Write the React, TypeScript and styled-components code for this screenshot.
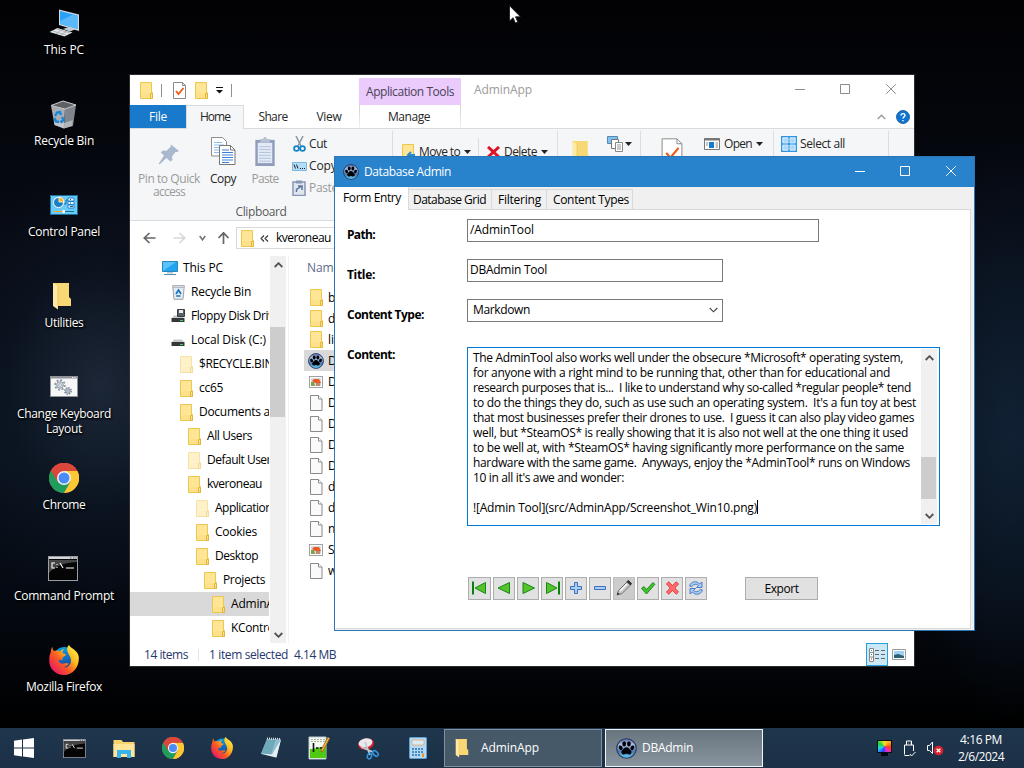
import React, { useLayoutEffect, useRef, useState } from 'react';
import styled, { createGlobalStyle, css } from 'styled-components';

const Global = createGlobalStyle`
  * { box-sizing: border-box; }
  html, body, #root { margin: 0; width: 1024px; height: 768px; overflow: hidden; background: #000; }
  body { font: 12px/16px "Open Sans", "Noto Sans", sans-serif; color: #000; }
  svg { display: block; flex: none; }
`;

/* ---------- text ---------- */

const Run = styled.span<{ $color?: string; $bold?: boolean }>`
  display: inline-block;
  white-space: pre;
  color: ${p => p.$color || 'inherit'};
  font-weight: ${p => (p.$bold ? 700 : 400)};
`;

type TextProps = { children: string; w?: number; color?: string; bold?: boolean };

/* Tracks a run of text so that it fills the given width. */
function Text({ children, w, color, bold }: TextProps) {
  const ref = useRef<HTMLSpanElement>(null);
  const [spacing, setSpacing] = useState(0);
  useLayoutEffect(() => {
    if (!w || !ref.current) return;
    ref.current.style.letterSpacing = '0px';
    const natural = ref.current.getBoundingClientRect().width;
    const next = (w - natural) / children.length;
    ref.current.style.letterSpacing = `${next}px`;
    setSpacing(next);
  }, [w, children]);
  return (
    <Run ref={ref} $color={color} $bold={bold} style={{ letterSpacing: `${spacing}px` }}>
      {children}
    </Run>
  );
}

/* ---------- icons ---------- */

const Folder = ({ faded }: { faded?: boolean }) => (
  <svg width="14" height="17" viewBox="0 0 14 17" opacity={faded ? 0.5 : 1}>
    <path d="M.5.5h11v10h1v6H.5z" fill="#ffe08a" stroke="#edc64c" />
    <path d="M1 1h10v10H1z" fill="#ffe596" />
    <path d="M10.5 16.500v-5h2v5z" fill="#ffe08a" stroke="#e3b63a" />
  </svg>
);

const BigFolder = ({ w = 20, h = 28 }: { w?: number; h?: number }) => (
  <svg width={w} height={h} viewBox="0 0 20 28">
    <path d="M1 1h16v14l2 2v7H6z" fill="#f8d775" />
    <path d="M1 1l5 3.500v23L1 24z" fill="#ffe9a6" />
    <path d="M6 4.500v19.500" stroke="#eec65a" />
  </svg>
);

const Page = () => (
  <svg width="13" height="16" viewBox="0 0 13 16">
    <path d="M.5.5h8l3.500 3.500v11.500H.5z" fill="#fafafa" stroke="#8a8a8a" />
    <path d="M8.500.5v3.500H12" fill="#fff" stroke="#8a8a8a" />
  </svg>
);

const Thumb = () => (
  <svg width="14" height="12" viewBox="0 0 14 12">
    <rect x=".5" y=".5" width="13" height="11" fill="#fff" stroke="#a0a0a0" />
    <rect x="2" y="2" width="10" height="8" fill="#d3dbe0" />
    <path d="M3 5l2-2h5l2 4H6z" fill="#ea5a22" />
    <path d="M2 6h3l1 4H2z" fill="#7fa04b" />
    <path d="M7 7h4v3H7z" fill="#b98b6d" />
  </svg>
);

const Paw = ({ size = 16 }: { size?: number }) => (
  <svg width={size} height={size} viewBox="0 0 20 20">
    <defs>
      <linearGradient id="pawGlow" x1="0" y1="0" x2="0" y2="1">
        <stop offset="0" stopColor="#5d6fb0" />
        <stop offset=".3" stopColor="#a9bddf" />
        <stop offset=".65" stopColor="#4a78b4" />
        <stop offset="1" stopColor="#62d2f7" />
      </linearGradient>
    </defs>
    <circle cx="10" cy="10" r="9.300" fill="url(#pawGlow)" stroke="#26365c" strokeWidth="1.100" />
    <ellipse cx="7.800" cy="5.500" rx="1.800" ry="2.500" />
    <ellipse cx="12.300" cy="5.500" rx="1.800" ry="2.500" />
    <ellipse cx="4.500" cy="9.300" rx="1.700" ry="2.300" transform="rotate(-25 4.500 9.300)" />
    <ellipse cx="15.600" cy="9.300" rx="1.700" ry="2.300" transform="rotate(25 15.600 9.300)" />
    <path d="M10 8.800c2 0 2.400 1.600 3.700 2.600 1.800 1.400 1.200 4.300-1 4.300-1.200 0-1.700-.6-2.700-.6s-1.500.6-2.700.6c-2.200 0-2.800-2.900-1-4.300C7.600 10.400 8 8.800 10 8.800z" />
  </svg>
);

const Chrome = ({ size }: { size: number }) => (
  <svg width={size} height={size} viewBox="0 0 30 30">
    <circle cx="15" cy="15" r="15" fill="#d9483b" />
    <path d="M2 7.500A15 15 0 0 0 15 30l6.500-11.500h-13z" fill="#1f9d5c" />
    <path d="M15 30A15 15 0 0 0 28.500 8H15l6.500 10.500z" fill="#fcc934" />
    <path d="M2 7.500L8.700 19 15 8h13.500A15 15 0 0 0 2 7.500z" fill="#d9483b" />
    <circle cx="15" cy="15" r="7" fill="#f4f4f4" />
    <circle cx="15" cy="15" r="5.500" fill="#4b8bf5" />
  </svg>
);

const Firefox = ({ size }: { size: number }) => (
  <svg width={size} height={size} viewBox="0 0 30 30">
    <defs>
      <linearGradient id="foxFire" x1=".9" y1=".05" x2=".1" y2=".8">
        <stop offset="0" stopColor="#fff04a" />
        <stop offset=".35" stopColor="#ffb81f" />
        <stop offset=".65" stopColor="#fb5a22" />
        <stop offset="1" stopColor="#ea1f62" />
      </linearGradient>
      <linearGradient id="foxGlobe" x1=".3" y1="0" x2=".5" y2="1">
        <stop offset="0" stopColor="#05a4ea" />
        <stop offset="1" stopColor="#1c3f9b" />
      </linearGradient>
    </defs>
    <circle cx="15.500" cy="13" r="11" fill="url(#foxGlobe)" />
    <path d="M3.500 2c0 2 .5 3 1.500 4 2-1 4.500-.5 6 .5C12 5 14 4 15.500 4 14 5 13.500 6.500 13.500 8c1 1 2.500.8 3.500 1.500-.5 1.500-3 2-3.500 3.500 0 1 .3 1.500 0 2-2-.8-4 0-4 1 1 2 3 3 5.500 2.500 2-.5 3-1 4.500 0 .5 1-3 3.500-6 3.500 5 1.500 8.500-2 8.500-6.500 0-4-3-6.500-3.700-9.500C17.800 3.500 18.500 1 20 0c1 3 9 5 9.800 12C30.500 22 24 30 15 30S-.5 23 .3 14C.5 9 2 7.500 2 6c0-2 .5-3 1.500-4z" fill="url(#foxFire)" />
  </svg>
);

const Terminal = ({ w, h }: { w: number; h: number }) => (
  <svg width={w} height={h} viewBox="0 0 30 25">
    <rect x=".5" y=".5" width="29" height="24" fill="#050505" stroke="#9b9da3" />
    <path d="M1 4h28v2C14 7 6 11 1 17z" fill="#454545" />
    <path d="M1 1h28v2H1z" fill="#d3d6db" />
    <path d="M22 2h1.500M25 2h1.500M27.500 2h1" stroke="#555" />
    <path d="M7 7H4v5h3M9 8v1M9 11v1M12 7l3 5M18 12h8" stroke="#fff" fill="none" strokeWidth="1.100" />
  </svg>
);

const Computer = () => (
  <svg width="31" height="28" viewBox="0 0 31 28">
    <path d="M10 .5l20 5V22L10 16z" fill="#d5dbe0" />
    <path d="M11 2l17.500 4.500V20L11 15z" fill="#2aa1f7" />
    <path d="M11 12L24 5.500l4.500 1V20L11 15z" fill="#5bb9fa" />
    <path d="M14 20l6-2 7 2-6 2.500z" fill="#c5ccd1" />
    <path d="M.5 23l8-4 15 4.500-8 4z" fill="#dfe3e6" />
    <path d="M4 22l13 4M8 20l13 4M7 25l6-5M12 26l6-4" stroke="#98a2ab" strokeWidth=".7" />
  </svg>
);

const RecycleBin = () => (
  <svg width="27" height="29" viewBox="0 0 27 29">
    <path d="M1 5.500L15 9l-1 19.500L4.500 25z" fill="#a9adb2" />
    <path d="M15 9l11-4-3 21-9 2.500z" fill="#7f858b" />
    <path d="M1 5.500L13 1l13 4-11 4z" fill="#5e6064" stroke="#c9cccf" />
    <path d="M4 22l10 1 9-3-1 6-8 2.500L4.500 25z" fill="#d3d6d8" opacity=".6" />
    <path d="M5 16l2-3.500 3-.5 1 3M12 17l1.500 3-3 2.500M4.500 18l1.500 3.500 3 .5" stroke="#1386dd" strokeWidth="2.300" fill="none" />
  </svg>
);

const ControlPanel = () => (
  <svg width="28" height="20" viewBox="0 0 28 20">
    <rect x=".5" y=".5" width="27" height="19" fill="#6bcbf7" stroke="#1c6e9d" />
    <circle cx="8.500" cy="7.500" r="5" fill="#1c7cc6" stroke="#fff" />
    <path d="M9 7V2a5 5 0 0 1 5 5z" fill="#ffb319" stroke="#fff" strokeWidth=".8" />
    <path d="M14 9h2V5h2" stroke="#1c6e9d" fill="none" />
    <path d="M18 3h6v3h-6zM18 6.500h6v3h-6zM18 10h6v3h-6z" fill="#eef9ff" stroke="#1c7cc6" strokeWidth=".9" />
    <path d="M20 4.500h1M20 8h1M20 11.500h3" stroke="#14629a" />
    <path d="M4 16.500h9" stroke="#f2a52b" /><path d="M14 16.500h10" stroke="#1c6e9d" />
    <rect x="12.500" y="15" width="2.500" height="3" fill="#fff" />
  </svg>
);

const Gears = () => (
  <svg width="28" height="21" viewBox="0 0 28 21">
    <rect x=".5" y=".5" width="27" height="20" fill="#f7f7f7" stroke="#8e9196" />
    <path d="M0 1.500h28" stroke="#8e9196" strokeWidth="2" /><path d="M22 1.500h1M24.500 1.500h1" stroke="#fff" />
    <circle cx="10" cy="9" r="4.800" fill="none" stroke="#8b98a3" strokeWidth="1.800" strokeDasharray="2 1.700" />
    <circle cx="10" cy="9" r="3.300" fill="#d5dce1" stroke="#8b98a3" /><circle cx="10" cy="9" r="1.300" fill="#fff" stroke="#8b98a3" strokeWidth=".7" />
    <circle cx="18" cy="15" r="3.200" fill="none" stroke="#7f8c97" strokeWidth="1.500" strokeDasharray="1.500 1" />
    <circle cx="18" cy="15" r="2.200" fill="#d5dce1" stroke="#7f8c97" /><circle cx="18" cy="15" r=".8" fill="#7f8c97" />
  </svg>
);

const CheckDoc = ({ w = 13, h = 17 }: { w?: number; h?: number }) => (
  <svg width={w} height={h} viewBox="0 0 13 17">
    <path d="M.5.5h9l3 3v13H.5z" fill="#fff" stroke="#8a8a8a" strokeWidth={13 / w} />
    <path d="M9.500.5v3h3" fill="none" stroke="#8a8a8a" strokeWidth={13 / w} />
    <path d="M3 9l2.500 3 5-6" fill="none" stroke="#f25a16" strokeWidth={w > 13 ? 1.3 : 1.8} />
  </svg>
);

const Caret = () => <svg width="7" height="4" viewBox="0 0 7 4"><path d="M0 0h7L3.500 4z" fill="#222" /></svg>;

type CaptionKind = 'min' | 'max' | 'close';
const captionKinds: CaptionKind[] = ['min', 'max', 'close'];
const captionPaths: Record<CaptionKind, string> = {
  min: 'M0 5.500h10',
  max: 'M.5.5h9v9h-9z',
  close: 'M.2.2l9.600 9.600M9.800.2L.2 9.800',
};
const CaptionIcon = ({ kind, color }: { kind: CaptionKind; color: string }) => (
  <svg width="10" height="10" viewBox="0 0 10 10"><path d={captionPaths[kind]} fill="none" stroke={color} /></svg>
);

const Chevron = ({ up, color = '#505050', size = 9, weight = 1.8 }: { up?: boolean; color?: string; size?: number; weight?: number }) => (
  <svg width={size} height="6" viewBox={`0 0 ${size} 6`}>
    <path d={up ? `M.7 5L${size / 2} 1.200 ${size - 0.7} 5` : `M.7 1L${size / 2} 4.800 ${size - 0.7} 1`} fill="none" stroke={color} strokeWidth={weight} />
  </svg>
);

/* ---------- desktop ---------- */

const Desktop = styled.div`
  position: relative;
  width: 1024px;
  height: 768px;
  display: flex;
  flex-direction: column;
  overflow: hidden;
  background:
    radial-gradient(ellipse 170px 220px at 100px 385px, rgba(42, 54, 74, 0.6), rgba(20, 32, 50, 0.3) 55%, transparent),
    radial-gradient(ellipse 110px 290px at 1010px 430px, rgba(22, 44, 68, 0.6), transparent),
    linear-gradient(#020204 0, #04060c 120px, #070b14 260px, #08111c 450px, #050a12 590px, #010204 700px, #000 728px);
`;

const IconColumn = styled.div`
  flex: 1;
  width: 128px;
  display: grid;
  grid-template-rows: repeat(8, 91px);
`;

const Shortcut = styled.div`
  display: flex;
  flex-direction: column;
  align-items: center;
  padding-top: 6px;
  color: #fff;
  line-height: 15px;
  text-shadow: 1px 1px 2px #000, 0 1px 2px #000;
`;

const ShortcutIcon = styled.div<{ $lift?: number; $shift?: number }>`
  height: 36px;
  display: flex;
  align-items: center;
  padding-bottom: ${p => 2 + (p.$lift || 0) * 2}px;
  padding-right: ${p => p.$shift || 0}px;
`;

const Windowed = styled.section<{ $x: number; $y: number; $w: number; $h: number }>`
  position: absolute;
  left: ${p => p.$x}px;
  top: ${p => p.$y}px;
  width: ${p => p.$w}px;
  height: ${p => p.$h}px;
  display: flex;
  flex-direction: column;
  background: #fff;
`;

const shortcuts: { icon: React.ReactNode; lift?: number; shift?: number; lines: [string, number][] }[] = [
  { icon: <Computer />, lines: [['This PC', 40]] },
  { icon: <RecycleBin />, shift: 1, lines: [['Recycle Bin', 60]] },
  { icon: <ControlPanel />, lines: [['Control Panel', 72]] },
  { icon: <BigFolder />, shift: 4, lines: [['Utilities', 39]] },
  { icon: <Gears />, lift: 1, lines: [['Change Keyboard', 94], ['Layout', 36]] },
  { icon: <Chrome size={30} />, lines: [['Chrome', 43]] },
  { icon: <Terminal w={30} h={25} />, lift: 1, shift: 2, lines: [['Command Prompt', 100]] },
  { icon: <Firefox size={30} />, lines: [['Mozilla Firefox', 76]] },
];

/* ---------- explorer ---------- */

const ExplorerFrame = styled(Windowed)`
  outline: 1px solid #2b2c2f;
  color: #262626;
`;

const QuickBar = styled.div`
  height: 30px;
  flex: none;
  display: flex;
  align-items: center;
`;

const Slot = styled.div<{ $w: number; $pad?: number }>`
  width: ${p => p.$w}px;
  height: 100%;
  padding-left: ${p => p.$pad || 0}px;
  flex: none;
  display: flex;
  align-items: center;
`;

const Tick = styled.i`
  width: 1px;
  height: 13px;
  background: #8f8f8f;
`;

const ContextTab = styled.div`
  width: 102px;
  height: 27px;
  align-self: flex-end;
  display: flex;
  align-items: center;
  justify-content: center;
  padding-top: 1px;
  background: #eacbfb;
  color: #494158;
`;

const Captions = styled.div<{ $right: number; $top: number }>`
  margin-left: auto;
  display: flex;
  gap: 35px;
  padding: ${p => p.$top}px ${p => p.$right}px 0 0;
  align-self: flex-start;
  > :last-child { margin-left: 1px; }
`;

const RibbonTabs = styled.div`
  height: 24px;
  flex: none;
  display: flex;
  border-bottom: 1px solid #dadbdc;
`;

const RibbonTab = styled.div<{ $w: number; $kind?: 'file' | 'active' | 'context' }>`
  width: ${p => p.$w}px;
  height: 23px;
  display: flex;
  align-items: center;
  justify-content: center;
  ${p => p.$kind === 'file' && css`background: #1979ca; color: #fff;`}
  ${p => p.$kind === 'active' && css`background: #f5f6f7; border: 1px solid #dadbdc; border-bottom: 0; height: 24px; padding-bottom: 1px;`}
  ${p => p.$kind === 'context' && css`
    margin-left: 3px;
    padding-right: 2px;
    border: solid transparent;
    border-width: 0 1px;
    border-image: linear-gradient(#cfcfcf, #f4f4f4) 1;
  `}
`;

const RibbonHelp = styled.div`
  margin-left: auto;
  display: flex;
  align-items: center;
  gap: 10px;
  padding-right: 4px;
`;

const Ribbon = styled.div`
  height: 92px;
  flex: none;
  display: flex;
  background: #f5f6f7;
  border-bottom: 1px solid #dadbdc;
`;

const Group = styled.div<{ $w: number }>`
  width: ${p => p.$w}px;
  height: 86px;
  margin-top: 2px;
  flex: none;
  display: flex;
  flex-direction: column;
  border-right: 1px solid #dcdddf;
`;

const GroupRow = styled.div`
  display: flex;
  height: 73px;
  flex: none;
`;

const BigButton = styled.div<{ $w: number; $dim?: boolean }>`
  width: ${p => p.$w}px;
  padding-top: 4px;
  display: flex;
  flex-direction: column;
  align-items: center;
  line-height: 13px;
  color: ${p => (p.$dim ? '#9a9a9a' : '#262626')};
`;

const BigIcon = styled.div`
  height: 37px;
  display: flex;
  justify-content: center;
  align-items: flex-start;
  padding-top: 2px;
`;

const SmallStack = styled.div`
  display: flex;
  flex-direction: column;
  padding-top: 2px;
`;

const SmallButton = styled.div<{ $dim?: boolean }>`
  height: 22px;
  display: flex;
  align-items: center;
  color: ${p => (p.$dim ? '#9a9a9a' : '#262626')};
`;

const GroupName = styled.div`
  align-self: center;
  color: #5a5a5a;
`;

const Inline = styled.div<{ $top: number; $left: number; $gap?: number }>`
  display: flex;
  align-items: center;
  gap: ${p => p.$gap ?? 4}px;
  height: 16px;
  margin: ${p => p.$top}px 0 0 ${p => p.$left}px;
`;

const InlineCell = styled.div<{ $w: number; $line?: boolean }>`
  width: ${p => p.$w}px;
  flex: none;
  ${p => p.$line && css`border-right: 1px solid #dcdddf; margin-top: 7px; > div { margin-top: 6px; }`}
`;

const NavBar = styled.div`
  height: 35px;
  flex: none;
  display: flex;
  align-items: flex-start;
  padding: 6px 0 0 13px;
`;

const NavSlot = styled.div<{ $w: number }>`
  width: ${p => p.$w}px;
  height: 22px;
  display: flex;
  align-items: center;
`;

const AddressBox = styled.div`
  flex: 1;
  height: 22px;
  border: 1px solid #d9d9d9;
  display: flex;
  align-items: center;
  padding-left: 4px;
  color: #000;
`;

const Browser = styled.div`
  height: 387px;
  flex: none;
  display: flex;
  color: #000;
`;

const Tree = styled.div`
  width: 139px;
  margin-right: 1px;
  overflow: hidden;
`;

const TreeRow = styled.div<{ $indent: number; $on?: boolean }>`
  height: 24px;
  padding-left: ${p => p.$indent}px;
  display: flex;
  align-items: center;
  background: ${p => (p.$on ? '#d9d9d9' : 'transparent')};
`;

const TreeGlyph = styled.div<{ $w: number }>`
  width: ${p => p.$w}px;
  flex: none;
`;

const Scrollbar = styled.div<{ $w: number }>`
  width: ${p => p.$w}px;
  flex: none;
  display: flex;
  flex-direction: column;
  align-items: center;
  background: #f0f0f0;
`;

const ScrollArrow = styled.div`
  height: 17px;
  display: flex;
  align-items: center;
`;

const ScrollGap = styled.div<{ $h: number }>`
  height: ${p => p.$h}px;
`;

const ScrollThumb = styled.div<{ $h: number }>`
  width: 15px;
  height: ${p => p.$h}px;
  margin: 0 1px auto 0;
  background: #cdcdcd;
`;

const FileList = styled.div`
  flex: 1;
  margin-left: 2px;
  border-left: 1px solid #f0f0f0;
  padding-left: 15px;
`;

const ListHeader = styled.div`
  height: 31px;
  padding: 4px 0 0 3px;
  color: #5c6b8c;
`;

const FileRow = styled.div<{ $on?: boolean }>`
  height: 21px;
  padding-left: 4px;
  display: flex;
  align-items: center;
  background: ${p => (p.$on ? '#d9d9d9' : 'transparent')};
`;

const FileGlyph = styled.div<{ $pad: number }>`
  width: 20px;
  padding-left: ${p => p.$pad}px;
  flex: none;
  display: flex;
  align-items: center;
`;

const StatusBar = styled.div`
  height: 23px;
  flex: none;
  display: flex;
  align-items: center;
  padding-left: 14px;
  color: #26376d;
`;

const Divider = styled.i`
  width: 1px;
  height: 12px;
  margin: 0 10px;
  background: #e6e6e6;
`;

const ViewButtons = styled.div`
  margin-left: auto;
  display: flex;
  align-items: center;
  gap: 4px;
  padding-right: 8px;
`;

const DetailsView = styled.div`
  width: 22px;
  height: 23px;
  display: flex;
  align-items: center;
  justify-content: center;
  background: #cce8f6;
  border: 1px solid #26a0da;
`;

const MiniComputer = () => (
  <svg width="16" height="16" viewBox="0 0 16 16"><path d="M.5 1.500h15v10H.5z" fill="#22a5f0" stroke="#2b85bd" /><path d="M1 11L14 2H1z" fill="#58c4fb" /><path d="M5 12h6v1.500H5z" fill="#bcc6cc" /><path d="M2 14.500h12" stroke="#4f8eb5" /></svg>
);
const MiniBin = () => (
  <svg width="13" height="15" viewBox="0 0 13 15"><path d="M.7.7h11.600L11 14.300H2z" fill="#e8ebee" stroke="#9aa2a9" /><path d="M1 2.500h11" stroke="#b6bcc2" /><path d="M4 9l2.500-4L9 9M8.500 11H4.200" stroke="#1275c4" strokeWidth="1.700" fill="none" /></svg>
);
const MiniDrive = ({ floppy }: { floppy?: boolean }) => (
  <svg width="14" height="14" viewBox="0 0 14 14">
    <path d="M1 9l2-2.500h8L13 9z" fill="#c4c7ca" /><path d="M.5 9h13v4H.5z" fill="#35383b" /><path d="M9 11.500h3" stroke="#4bd45b" />
    {floppy && <><path d="M6.500.5h7v7h-7z" fill="#596067" stroke="#383d42" /><path d="M8 1h4v3H8z" fill="#e9ecee" /></>}
  </svg>
);

type TreeItem = { name: string; indent: number; w?: number; icon?: React.ReactNode; glyph?: number; on?: boolean; faded?: boolean };
const tree: TreeItem[] = [
  { name: 'This PC', indent: 32, w: 40, icon: <MiniComputer />, glyph: 21 },
  { name: 'Recycle Bin', indent: 42, w: 60, icon: <MiniBin />, glyph: 19 },
  { name: 'Floppy Disk Drive', indent: 41, w: 89, icon: <MiniDrive floppy />, glyph: 20 },
  { name: 'Local Disk (C:)', indent: 41, w: 75, icon: <MiniDrive />, glyph: 20 },
  { name: '$RECYCLE.BIN', indent: 50, w: 74, faded: true },
  { name: 'cc65', indent: 50, w: 24 },
  { name: 'Documents and Settings', indent: 50, w: 130 },
  { name: 'All Users', indent: 58, w: 45 },
  { name: 'Default User', indent: 58, w: 64, faded: true },
  { name: 'kveroneau', indent: 58, w: 55 },
  { name: 'Application Data', indent: 66, w: 84, faded: true },
  { name: 'Cookies', indent: 66, w: 42 },
  { name: 'Desktop', indent: 66, w: 43 },
  { name: 'Projects', indent: 74, w: 42 },
  { name: 'AdminApp', indent: 82, w: 57, on: true },
  { name: 'KControl', indent: 82, w: 46 },
];

const files: { name: string; kind: 'folder' | 'paw' | 'thumb' | 'page'; on?: boolean }[] = [
  { name: 'b', kind: 'folder' },
  { name: 'd', kind: 'folder' },
  { name: 'li', kind: 'folder' },
  { name: 'D', kind: 'paw', on: true },
  { name: 'D', kind: 'thumb' },
  { name: 'D', kind: 'page' },
  { name: 'D', kind: 'page' },
  { name: 'D', kind: 'page' },
  { name: 'D', kind: 'page' },
  { name: 'd', kind: 'page' },
  { name: 'd', kind: 'page' },
  { name: 'n', kind: 'page' },
  { name: 'S', kind: 'thumb' },
  { name: 'w', kind: 'page' },
];
const fileGlyphs = {
  folder: { pad: 2, icon: <Folder /> },
  paw: { pad: 0, icon: <Paw /> },
  thumb: { pad: 1, icon: <Thumb /> },
  page: { pad: 2, icon: <Page /> },
};

const Arrow = ({ turn = 0, color = '#666' }: { turn?: number; color?: string }) => (
  <svg width="13" height="12" viewBox="0 0 13 12"><path d="M12.500 6H1.500M6.500 1L1.300 6l5.200 5" fill="none" stroke={color} strokeWidth="1.700" transform={`rotate(${turn} 6.500 6)`} /></svg>
);

function RibbonArea() {
  return (
    <Ribbon>
      <Group $w={263}>
        <GroupRow>
          <BigButton $w={78} $dim>
            <BigIcon>
              <svg width="22" height="28" viewBox="0 0 22 28"><path d="M13 7.500l8 6.500-2 1h-1.500L14 19.500l.5 3.500-2 1.500-4-3.500-7 6.500-.7-1L6 18.500 2.800 15.500l2-2 3.700.3 4-3.800z" fill="#a9b8cd" /></svg>
            </BigIcon>
            <Text w={62}>Pin to Quick</Text>
            <Text w={32}>access</Text>
          </BigButton>
          <BigButton $w={30}>
            <BigIcon>
              <svg width="25" height="28" viewBox="0 0 25 28">
                <path d="M.5.500h11l4 4V19H.5z" fill="#fff" stroke="#8d8d8d" /><path d="M3 5.500h8M3 8h10M3 10.500h10M3 13h10M3 15.500h6" stroke="#8dbcf0" />
                <path d="M8.500 8.500h11l4.500 4.500v14.500H8.500z" fill="#fff" stroke="#777" /><path d="M19.500 8.500v4.500H24" fill="none" stroke="#777" />
                <path d="M11 13h7M11 15.500h11M11 18h11M11 20.500h11M11 23h11M11 25.500h7" stroke="#3a80d8" />
              </svg>
            </BigIcon>
            <Text w={26}>Copy</Text>
          </BigButton>
          <BigButton $w={54} $dim>
            <BigIcon>
              <svg width="20" height="29" viewBox="0 0 20 30"><path d="M0 3h20v27H0z" fill="#8f9dbb" /><path d="M2.500 6h15v21h-15z" fill="#e3eaf5" /><path d="M5 2h3l1-2h2l1 2h3v4H5z" fill="#b6c0d4" /><path d="M4 10h12M4 13h12M4 16h12M4 19h12M4 22h12M4 25h12" stroke="#b1c2de" /></svg>
            </BigIcon>
            <Text w={27}>Paste</Text>
          </BigButton>
          <SmallStack>
            <SmallButton>
              <Slot $w={17} $pad={1}>
                <svg width="13" height="16" viewBox="0 0 13 16"><path d="M3 0l5 10M10 0L5 10" stroke="#8b98a3" strokeWidth="1.500" /><circle cx="3.500" cy="12.500" r="2.400" fill="none" stroke="#1585c7" strokeWidth="1.800" /><circle cx="9.500" cy="12.500" r="2.400" fill="none" stroke="#1585c7" strokeWidth="1.800" /></svg>
              </Slot>
              <Text w={18}>Cut</Text>
            </SmallButton>
            <SmallButton>
              <Slot $w={17}>
                <svg width="15" height="9" viewBox="0 0 15 9"><path d="M.5.500h14v8H.5z" fill="#b5dcf7" stroke="#77b9e4" /><path d="M2 2.500l1.500 4M4.500 2.500l1.500 4M8 6.500h1M10 6.500h1M12 6.500h1" stroke="#222" /></svg>
              </Slot>
              <Text w={56}>Copy path</Text>
            </SmallButton>
            <SmallButton $dim>
              <Slot $w={17}>
                <svg width="14" height="16" viewBox="0 0 14 16"><path d="M1 2h12v13.500H1z" fill="#dfe6f0" stroke="#8797b4" strokeWidth="1.500" /><path d="M4 .5h6v3H4z" fill="#8797b4" /><path d="M4.500 12V9.500L9 6.500M6 6h4v4" fill="none" stroke="#5f7499" strokeWidth="1.500" /></svg>
              </Slot>
              <Text w={76}>Paste shortcut</Text>
            </SmallButton>
          </SmallStack>
        </GroupRow>
        <GroupName><Text w={51}>Clipboard</Text></GroupName>
      </Group>
      <Group $w={165}>
        <GroupRow>
          <InlineCell $w={86} $line>
            <Inline $top={6} $left={9} $gap={4}>
              <svg width="13" height="17" viewBox="0 0 13 17"><path d="M.5.500h11v16H.5z" fill="#ffe596" stroke="#edc64c" /><path d="M13 11H6M9 8l-3 3 3 3" stroke="#2b8ad4" strokeWidth="2" fill="none" /></svg>
              <Text w={41}>Move to</Text>
              <Caret />
            </Inline>
          </InlineCell>
          <Inline $top={13} $left={8} $gap={4}>
            <svg width="13" height="12" viewBox="0 0 13 12"><path d="M1 1l11 10M12 1L1 11" stroke="#e01322" strokeWidth="3" /></svg>
            <Text w={33}>Delete</Text>
            <Caret />
          </Inline>
        </GroupRow>
      </Group>
      <Group $w={83}>
        <GroupRow>
          <Inline $top={14} $left={13}>
            <BigFolder w={20} h={27} />
          </Inline>
          <Inline $top={5} $left={16} $gap={2}>
            <svg width="16" height="16" viewBox="0 0 16 16"><path d="M.5.500h10v7H.5z" fill="#7cc1f0" stroke="#5c88a8" /><path d="M4.500 3.500h7v9h-7z" fill="#fff" stroke="#777" /><path d="M8.500 6.500h7v9h-7z" fill="#fff" stroke="#888" /><path d="M10 9h4M10 11h4M10 13h4" stroke="#999" /></svg>
            <Caret />
          </Inline>
        </GroupRow>
      </Group>
      <Group $w={133}>
        <GroupRow>
          <Inline $top={13} $left={20}><CheckDoc w={22} h={28} /></Inline>
          <Inline $top={5} $left={21} $gap={4}>
            <svg width="16" height="12" viewBox="0 0 16 12"><path d="M.5.500h15v11H.5z" fill="#fff" stroke="#777" /><path d="M0 1.500h16" stroke="#777" strokeWidth="2" /><path d="M5 4h5v6H5z" fill="#1979ca" /><path d="M11.500 5h2.500M11.500 7h2.500M11.500 9h2.500M2 5h2M2 7h2" stroke="#888" /></svg>
            <Text w={28}>Open</Text>
            <Caret />
          </Inline>
        </GroupRow>
      </Group>
      <Group $w={115}>
        <GroupRow>
          <Inline $top={5} $left={7} $gap={3}>
            <svg width="16" height="16" viewBox="0 0 16 16"><path d="M.5.500h15v15H.5zM8 0v16M0 8h16" fill="#b7dffb" stroke="#2f95e0" strokeWidth="1.500" /><path d="M2 2h5v5H2zM9 2h5v5H9zM2 9h5v5H2zM9 9h5v5H9z" fill="#a9d8fa" stroke="#e6f5ff" strokeWidth=".6" /></svg>
            <Text w={45}>Select all</Text>
          </Inline>
        </GroupRow>
      </Group>
    </Ribbon>
  );
}

function Explorer() {
  return (
    <ExplorerFrame $x={130} $y={75} $w={784} $h={591}>
      <QuickBar>
        <Slot $w={31} $pad={10}><Folder /></Slot>
        <Slot $w={12}><Tick /></Slot>
        <Slot $w={22}><CheckDoc /></Slot>
        <Slot $w={21}><Folder /></Slot>
        <Slot $w={15}><svg width="7" height="7" viewBox="0 0 7 7"><path d="M0 .5h7" stroke="#111" /><path d="M0 3h7L3.500 6.500z" fill="#111" /></svg></Slot>
        <Slot $w={128}><Tick /></Slot>
        <ContextTab><Text w={88}>Application Tools</Text></ContextTab>
        <Slot $w={80} $pad={13}><Text w={58} color="#9b9b9b">AdminApp</Text></Slot>
        <Captions $right={18} $top={9}>
          {captionKinds.map(k => <CaptionIcon key={k} kind={k} color="#8c8c8c" />)}
        </Captions>
      </QuickBar>
      <RibbonTabs>
        <RibbonTab $w={56} $kind="file"><Text w={18}>File</Text></RibbonTab>
        <RibbonTab $w={58} $kind="active"><Text w={30}>Home</Text></RibbonTab>
        <RibbonTab $w={58}><Text w={29}>Share</Text></RibbonTab>
        <RibbonTab $w={54}><Text w={25}>View</Text></RibbonTab>
        <RibbonTab $w={102} $kind="context"><Text w={42}>Manage</Text></RibbonTab>
        <RibbonHelp>
          <Chevron up color="#9b9b9b" weight={1.4} />
          <svg width="14" height="14" viewBox="0 0 14 14"><circle cx="7" cy="7" r="6.500" fill="#0f75d0" stroke="#0a4f93" strokeWidth=".8" /><path d="M5 5.500c0-2.500 4-2.500 4-.2C9 7 7 6.700 7 8.500M7 10v1.300" fill="none" stroke="#fff" strokeWidth="1.400" /></svg>
        </RibbonHelp>
      </RibbonTabs>
      <RibbonArea />
      <NavBar>
        <NavSlot $w={30}><Arrow /></NavSlot>
        <NavSlot $w={26}><Arrow turn={180} color="#d8d8d8" /></NavSlot>
        <NavSlot $w={18}><Chevron size={7} color="#777" weight={1.6} /></NavSlot>
        <NavSlot $w={19}><Arrow turn={90} /></NavSlot>
        <AddressBox>
          <Slot $w={19}><Folder /></Slot>
          <Slot $w={16}><svg width="9" height="7" viewBox="0 0 9 7"><path d="M4 .5l-3 3 3 3M8 .5l-3 3 3 3" fill="none" stroke="#333" strokeWidth="1.100" /></svg></Slot>
          <Text w={55}>kveroneau</Text>
        </AddressBox>
      </NavBar>
      <Browser>
        <Tree>
          {tree.map(t => (
            <TreeRow key={t.name} $indent={t.indent} $on={t.on}>
              <TreeGlyph $w={t.glyph || 19}>{t.icon || <Folder faded={t.faded} />}</TreeGlyph>
              <Text w={t.w}>{t.name}</Text>
            </TreeRow>
          ))}
        </Tree>
        <Scrollbar $w={16}>
          <ScrollArrow><Chevron up /></ScrollArrow>
          <ScrollGap $h={54} />
          <ScrollThumb $h={90} />
          <ScrollArrow><Chevron /></ScrollArrow>
        </Scrollbar>
        <FileList>
          <ListHeader><Text w={33}>Name</Text></ListHeader>
          {files.map((f, i) => (
            <FileRow key={i} $on={f.on}>
              <FileGlyph $pad={fileGlyphs[f.kind].pad}>{fileGlyphs[f.kind].icon}</FileGlyph>
              <Text>{f.name}</Text>
            </FileRow>
          ))}
        </FileList>
      </Browser>
      <StatusBar>
        <Text w={44}>14 items</Text>
        <Divider />
        <Text w={79}>1 item selected</Text>
        <Slot $w={57} $pad={6}><Text w={42}>4.14 MB</Text></Slot>
        <ViewButtons>
          <DetailsView>
            <svg width="17" height="14" viewBox="0 0 17 14"><path d="M.5.500h4v13h-4zM.5 4.500h4M.5 9h4" fill="#fff" stroke="#888" /><path d="M6 2.500h4M12 2.500h4M6 6.500h4M12 6.500h4M6 10.500h4M12 10.500h4" stroke="#666" /><path d="M2 2.500h1" stroke="#2a8" /><path d="M2 6.500h1" stroke="#36c" /><path d="M2 11h1" stroke="#d22" /></svg>
          </DetailsView>
          <svg width="14" height="11" viewBox="0 0 14 11"><path d="M.5.500h13v10H.5z" fill="#fff" stroke="#999" /><path d="M2 2h10v7H2z" fill="#9fd0f5" /><path d="M2 6l4-1 6 2v2H2z" fill="#2e5f74" /></svg>
        </ViewButtons>
      </StatusBar>
    </ExplorerFrame>
  );
}

/* ---------- database window ---------- */

const AdminFrame = styled(Windowed)`
  border: 1px solid #2a76b6;
  background: #f0f0f0;
`;

const TitleBar = styled.header`
  height: 30px;
  flex: none;
  display: flex;
  align-items: center;
  gap: 5px;
  padding-left: 8px;
  background: #2882cc;
  color: #fff;
`;

const TabStrip = styled.div`
  height: 22px;
  flex: none;
  display: flex;
  align-items: flex-end;
`;

const Tab = styled.div<{ $w: number; $pad: number; $on?: boolean }>`
  width: ${p => p.$w}px;
  height: ${p => (p.$on ? 23 : 20)}px;
  padding-left: ${p => p.$pad}px;
  padding-top: ${p => (p.$on ? 3 : 2)}px;
  background: ${p => (p.$on ? '#fff' : '#f0f0f0')};
  border: solid #d9d9d9;
  border-width: ${p => (p.$on ? '0 1px 0 0' : '1px 1px 0 0')};
  ${p => p.$on && css`margin-bottom: -1px; z-index: 1;`}
`;

const Sheet = styled.div`
  flex: 1;
  margin: 0 3px 1px 0;
  border: 1px solid #d9d9d9;
  border-left-color: #fff;
  background: #fff;
  padding: 9px 0 0 11px;
`;

const Field = styled.div<{ $h: number; $top?: number; $drop: number }>`
  height: ${p => p.$h}px;
  margin-top: ${p => p.$top || 0}px;
  display: grid;
  grid-template-columns: 120px 1fr;
  align-items: start;
  justify-items: start;
  > span { margin-top: ${p => p.$drop}px; }
`;

const InputBox = styled.div<{ $w: number; $pad: number }>`
  width: ${p => p.$w}px;
  height: 23px;
  border: 1px solid #7a7a7a;
  display: flex;
  justify-content: space-between;
  align-items: center;
  padding: 0 4px 1px ${p => p.$pad}px;
`;

const Editor = styled.div`
  width: 473px;
  height: 179px;
  border: 1px solid #0078d7;
  display: flex;
  justify-content: space-between;
  padding: 1px 2px 1px 5px;
  line-height: 15px;
`;

const Line = styled.div`
  height: 15px;
  display: flex;
`;

const EditorText = styled.div`
  padding-top: 1px;
`;

const TextCursor = styled.i`
  width: 1px;
  height: 14px;
  background: #000;
`;

const ActionRow = styled.div`
  display: flex;
  margin: 51px 0 0 121px;
`;

const ToolButton = styled.div<{ $on?: boolean; $wide?: boolean }>`
  width: ${p => (p.$wide ? 23 : 22)}px;
  height: 23px;
  margin-right: 2px;
  display: flex;
  align-items: center;
  justify-content: center;
  padding: 0 1px 1px 0;
  background: ${p => (p.$on ? '#cccccc' : '#e1e1e1')};
  border: 1px solid ${p => (p.$on ? '#bfbfbf' : '#adadad')};
`;

const ExportButton = styled.div`
  width: 73px;
  height: 23px;
  margin-left: 36px;
  display: flex;
  align-items: center;
  justify-content: center;
  background: #e1e1e1;
  border: 1px solid #adadad;
`;

const green = { fill: '#57c32c', stroke: '#148a14' };
const actions: React.ReactNode[] = [
  <><path d="M2 1.500v13" stroke="#0b800b" strokeWidth="2" /><path d="M14.500 2.500v11L4 8z" {...green} /></>,
  <path d="M13.500 2.500v11L2 8z" {...green} />,
  <path d="M3 2.500v11L14.500 8z" {...green} />,
  <><path d="M15 1.500v13" stroke="#0b800b" strokeWidth="2" /><path d="M2.500 2.500v11L13 8z" {...green} /></>,
  <path d="M6.500 2.500h3v4h4v3h-4v4h-3v-4h-4v-3h4z" fill="#a9cdf7" stroke="#3b70bd" />,
  <path d="M2.500 6.500h11v3h-11z" fill="#a9cdf7" stroke="#3b70bd" />,
  <><path d="M1 15l1.500-4.500L11 2l3.500 3-8.500 8.500z" fill="#c9c9c9" stroke="#6d6d6d" /><path d="M11 1.500l1.500-1 3 3-1 1.500z" fill="#333" stroke="#333" /><path d="M1 15l.8-2.500L3.500 14z" fill="#222" /><path d="M4 11l7-7" stroke="#fff" strokeWidth="1.200" /></>,
  <path d="M1.500 8.500l2.500-2 2.500 3L13 2.500l1.800 1.800L6.500 14z" fill="#3fc32f" stroke="#23851b" />,
  <path d="M2.500 4l2.200-2.200 3.800 3.800 3.800-3.800L14.500 4l-3.700 4 3.700 4-2.200 2.200-3.800-3.800-3.800 3.800L2.500 12l3.700-4z" fill="#ff6b6b" stroke="#e03e3e" />,
  <><path d="M1.500 6C3 1 9 .5 11.500 4L14 2v5.500H8.500L10.500 5.500C8.500 3.500 5 4 4 6.500z" fill="#a9cdf7" stroke="#3f74c0" strokeWidth=".9" /><path d="M14.500 10C13 15 7 15.500 4.500 12L2 14V8.500h5.500L5.500 10.500c2 2 5.500 1.500 6.500-1z" fill="#a9cdf7" stroke="#3f74c0" strokeWidth=".9" /></>,
];

const content: [string, number][] = [
  ['The AdminTool also works well under the obsecure *Microsoft* operating system,', 430],
  ['for anyone with a right mind to be running that, other than for educational and', 417],
  ['research purposes that is...  I like to understand why so-called *regular people* tend', 438],
  ["to do the things they do, such as use such an operating system.  It's a fun toy at best", 443],
  ['that most businesses prefer their drones to use.  I guess it can also play video games', 441],
  ['well, but *SteamOS* is really showing that it is also not well at the one thing it used', 435],
  ['to be well at, with *SteamOS* having significantly more performance on the same', 431],
  ['hardware with the same game.  Anyways, enjoy the *AdminTool* runs on Windows', 437],
  ["10 in all it's awe and wonder:", 151],
  ['', 0],
  ['![Admin Tool](src/AdminApp/Screenshot_Win10.png)', 284],
];

function DatabaseAdmin() {
  return (
    <AdminFrame $x={334} $y={156} $w={641} $h={475}>
      <TitleBar>
        <Paw />
        <Text w={87}>Database Admin</Text>
        <Captions $right={18} $top={9}>
          {captionKinds.map(k => <CaptionIcon key={k} kind={k} color="#fff" />)}
        </Captions>
      </TitleBar>
      <TabStrip>
        <Tab $w={74} $pad={8} $on><Text w={58}>Form Entry</Text></Tab>
        <Tab $w={83} $pad={4}><Text w={73}>Database Grid</Text></Tab>
        <Tab $w={55} $pad={6}><Text w={43}>Filtering</Text></Tab>
        <Tab $w={86} $pad={6}><Text w={76}>Content Types</Text></Tab>
      </TabStrip>
      <Sheet>
        <Field $h={40} $drop={8}><Text bold w={28}>Path:</Text><InputBox $w={352} $pad={2}><Text w={64}>/AdminTool</Text></InputBox></Field>
        <Field $h={40} $drop={8}><Text bold w={28}>Title:</Text><InputBox $w={256} $pad={2}><Text w={77}>DBAdmin Tool</Text></InputBox></Field>
        <Field $h={40} $drop={8}>
          <Text bold w={77}>Content Type:</Text>
          <InputBox $w={256} $pad={5}><Text w={57}>Markdown</Text><Chevron color="#444" weight={1.1} /></InputBox>
        </Field>
        <Field $h={179} $top={8} $drop={0}>
          <Text bold w={48}>Content:</Text>
          <Editor>
            <EditorText>
              {content.map(([line, w], i) => (
                <Line key={i}>{line && <Text w={w}>{line}</Text>}{i === content.length - 1 && <TextCursor />}</Line>
              ))}
            </EditorText>
            <Scrollbar $w={16}>
              <ScrollArrow><Chevron up /></ScrollArrow>
              <ScrollGap $h={91} />
              <ScrollThumb $h={42} />
              <ScrollArrow><Chevron /></ScrollArrow>
            </Scrollbar>
          </Editor>
        </Field>
        <ActionRow>
          {actions.map((a, i) => (
            <ToolButton key={i} $wide={i === 0} $on={i === 6}><svg width="16" height="16" viewBox="0 0 16 16">{a}</svg></ToolButton>
          ))}
          <ExportButton><Text w={34}>Export</Text></ExportButton>
        </ActionRow>
      </Sheet>
    </AdminFrame>
  );
}

/* ---------- taskbar ---------- */

const Taskbar = styled.footer`
  height: 40px;
  flex: none;
  display: flex;
  align-items: center;
  background: linear-gradient(#1e364c, #1c3046);
  color: #fff;
`;

const Launcher = styled.div<{ $w: number }>`
  width: ${p => p.$w}px;
  display: flex;
  justify-content: center;
`;

const TaskButton = styled.div<{ $on?: boolean }>`
  width: 158px;
  height: 38px;
  margin-right: 3px;
  padding-left: 10px;
  display: flex;
  align-items: center;
  background: ${p => (p.$on ? 'linear-gradient(#68757f, #89949d)' : '#465969')};
  border: 1px solid ${p => (p.$on ? '#f2f4f5' : '#8090a0')};
`;

const TaskGlyph = styled.div<{ $w: number }>`
  width: ${p => p.$w}px;
  display: flex;
`;

const Tray = styled.div`
  margin-left: auto;
  display: flex;
  align-items: center;
  gap: 11px;
`;

const Clock = styled.div`
  width: 80px;
  margin-left: -11px;
  padding-right: 6px;
  display: flex;
  flex-direction: column;
  align-items: center;
  line-height: 17px;
`;

const launchers: { w: number; icon: React.ReactNode }[] = [
  { w: 48, icon: <svg width="20" height="20" viewBox="0 0 20 20"><path d="M0 2.700l8-1.100v7.900H0zM9 1.500L20 0v9.500H9zM0 10.500h8v7.900l-8-1.100zM9 10.500h11V20L9 18.500z" fill="#fff" /></svg> },
  { w: 52, icon: <Terminal w={23} h={19} /> },
  { w: 47, icon: <svg width="22" height="19" viewBox="0 0 22 19"><path d="M.5 1h8l1.500 2H21.500v15H.5z" fill="#f8d36c" /><path d="M.5 5h21v13H.5z" fill="#ffe59a" /><path d="M4 19v-8h14v8h-4v-4H8v4z" fill="#35b4ee" /></svg> },
  { w: 51, icon: <Chrome size={22} /> },
  { w: 48, icon: <Firefox size={22} /> },
  { w: 49, icon: <svg width="22" height="22" viewBox="0 0 22 22"><path d="M7 2l14 .5-5 18L1 17z" fill="#8fc0cf" /><path d="M7 2l9 .5-5 15-10-1z" fill="#6fa9ba" /><path d="M1 16.500l11 1 9-15-4.500 18z" fill="#e7f0f1" /><path d="M7 1.500L21 2" stroke="#d8dfe1" strokeWidth="2" strokeDasharray="1 1" /></svg> },
  { w: 48, icon: <svg width="22" height="24" viewBox="0 0 22 24"><path d="M1 1h17v22H1z" fill="#f7faf2" stroke="#bcc" /><path d="M2 13c5 0 9-2 16-3v12H2z" fill="#4fc912" /><path d="M5.500 7v9M8 12h2.500M12 12h2.500" stroke="#111" strokeWidth="1.600" /><path d="M3 3.500h14M3 5.500h14" stroke="#8a9a8a" strokeDasharray="2 1" strokeWidth=".8" /><path d="M20 1l1.500 1.500L15 15l-2 1 .5-2.500z" fill="#f0c13e" stroke="#a86d24" /></svg> },
  { w: 49, icon: <svg width="22" height="23" viewBox="0 0 22 23"><ellipse cx="9" cy="7" rx="8" ry="5.500" fill="#d3202a" transform="rotate(-12 9 7)" /><ellipse cx="8.500" cy="5.800" rx="7" ry="4.500" fill="#e9e9ec" transform="rotate(-12 8.500 5.800)" /><path d="M4 10l12 5M8 5l5 13" stroke="#c3cad0" strokeWidth="1.800" /><ellipse cx="12.500" cy="19" rx="2" ry="3" fill="none" stroke="#3393dc" strokeWidth="1.600" transform="rotate(20 12.500 19)" /><ellipse cx="18.500" cy="16.500" rx="2" ry="3.200" fill="none" stroke="#3393dc" strokeWidth="1.600" transform="rotate(-45 18.500 16.500)" /></svg> },
  { w: 52, icon: <svg width="18" height="22" viewBox="0 0 18 22"><rect x=".5" y=".5" width="17" height="21" rx="1" fill="#b5d9f2" stroke="#5da2d4" /><path d="M3 3h12v5H3z" fill="#dcecf7" stroke="#e0a35c" strokeWidth=".7" /><path d="M3 12h12M3 15h12M3 18h9" stroke="#4a8ac3" strokeWidth="1.800" strokeDasharray="2 1" /><path d="M13 16.500h2V20h-2z" fill="#ef922e" /></svg> },
];

const SpectrumDisplay = styled.div`
  width: 15px;
  height: 16px;
  display: flex;
  flex-direction: column;
  align-items: center;
`;

const SpectrumScreen = styled.div`
  width: 15px;
  height: 13px;
  border: 1px solid #0b0f14;
  background: conic-gradient(from 45deg, #ffb020, #ff3a1a, #f22bd0, #2340ff, #1ed8e8, #20d83a, #f5e42a, #ffb020);
`;

const SpectrumStand = styled.div`
  width: 7px;
  height: 3px;
  background: #05080c;
`;

const Cursor = styled.div`
  position: absolute;
  left: 509px;
  top: 5px;
`;

export default function App() {
  return (
    <>
      <Global />
      <Desktop>
        <IconColumn>
          {shortcuts.map(s => (
            <Shortcut key={s.lines[0][0]}>
              <ShortcutIcon $lift={s.lift} $shift={s.shift}>{s.icon}</ShortcutIcon>
              {s.lines.map(([line, w]) => <Text key={line} w={w}>{line}</Text>)}
            </Shortcut>
          ))}
        </IconColumn>
        <Taskbar>
          {launchers.map((l, i) => <Launcher key={i} $w={l.w}>{l.icon}</Launcher>)}
          <TaskButton><TaskGlyph $w={26}><BigFolder w={14} h={20} /></TaskGlyph><Text w={58}>AdminApp</Text></TaskButton>
          <TaskButton $on><TaskGlyph $w={26}><Paw size={21} /></TaskGlyph><Text w={51}>DBAdmin</Text></TaskButton>
          <Tray>
            <SpectrumDisplay><SpectrumScreen /><SpectrumStand /></SpectrumDisplay>
            <svg width="13" height="17" viewBox="0 0 13 17"><path d="M3.500 5V1h5v4M1.500 14.500V5h9v6M1.500 15.500h5M5 3h.5M7 3h.5M7 14l1.500 2 4-4" fill="none" stroke="#fff" /></svg>
            <svg width="17" height="15" viewBox="0 0 17 15"><path d="M.5 4.500h2l3-3.500v11.500l-3-3h-2z" fill="none" stroke="#fff" /><circle cx="11.500" cy="9.500" r="4.800" fill="#d9222b" /><path d="M9.700 7.700l3.600 3.600M13.300 7.700l-3.600 3.600" stroke="#fff" strokeWidth="1.300" /></svg>
            <Clock><Text w={42}>4:16 PM</Text><Text w={46}>2/6/2024</Text></Clock>
          </Tray>
        </Taskbar>
        <Explorer />
        <DatabaseAdmin />
        <Cursor>
          <svg width="12" height="19" viewBox="0 0 12 19"><path d="M.5.700v15.300l3.600-3.300 2.300 5.300 2.400-1-2.300-5.200h5z" fill="#fff" stroke="#111" strokeWidth=".8" /></svg>
        </Cursor>
      </Desktop>
    </>
  );
}
